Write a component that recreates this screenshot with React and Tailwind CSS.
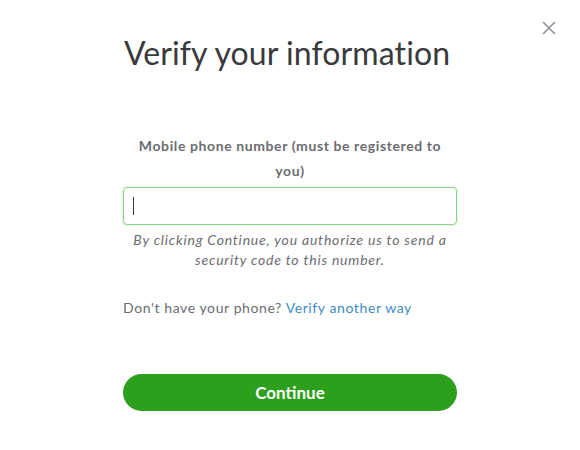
import React from 'react';

const App = () => {
  return (
    <div className="relative w-[580px] h-[450px] bg-white font-['Lato',sans-serif]">
      {/* Close */}
      <button className="absolute right-[23px] top-[20px] text-[#8d9096]">
        <svg width="16" height="16" viewBox="0 0 16 16" fill="none" stroke="currentColor" strokeWidth="1.6">
          <path d="M2 2l12 12M14 2L2 14" />
        </svg>
      </button>

      <div className="flex flex-col items-center pt-[34px]">
        <h1 className="text-[32px] leading-[38px] text-[#393a3d] tracking-[0.1px] mr-[6px]">Verify your information</h1>

        <div className="w-[334px] mt-[61px] flex flex-col">
          <p className="text-[14px] leading-[25px] font-bold text-[#6b6c72] text-center px-3 tracking-[0.6px]">
            Mobile phone number (must be registered to you)
          </p>
          <div className="mt-[4px] h-[38px] border border-[#8fcf87] rounded-[4px] shadow-[0_0_2px_rgba(44,160,28,0.35)] flex items-center px-[9px]">
            <div className="w-px h-[18px] bg-[#393a3d]" />
          </div>
          <p className="mt-[5px] text-[14px] leading-[20px] italic text-[#6b6c72] text-center px-1 tracking-[0.8px]">
            By clicking Continue, you authorize us to send a security code to this number.
          </p>
          <p className="mt-[28px] text-[14px] leading-[20px] text-[#6b6c72] tracking-[0.6px]">
            Don't have your phone? <span className="text-[#3d8dbf]">Verify another way</span>
          </p>
          <button className="mt-[56px] h-[37px] rounded-full bg-[#2ca01c] text-white font-bold text-[17px]">
            Continue
          </button>
        </div>
      </div>
    </div>
  );
};

export default App;
